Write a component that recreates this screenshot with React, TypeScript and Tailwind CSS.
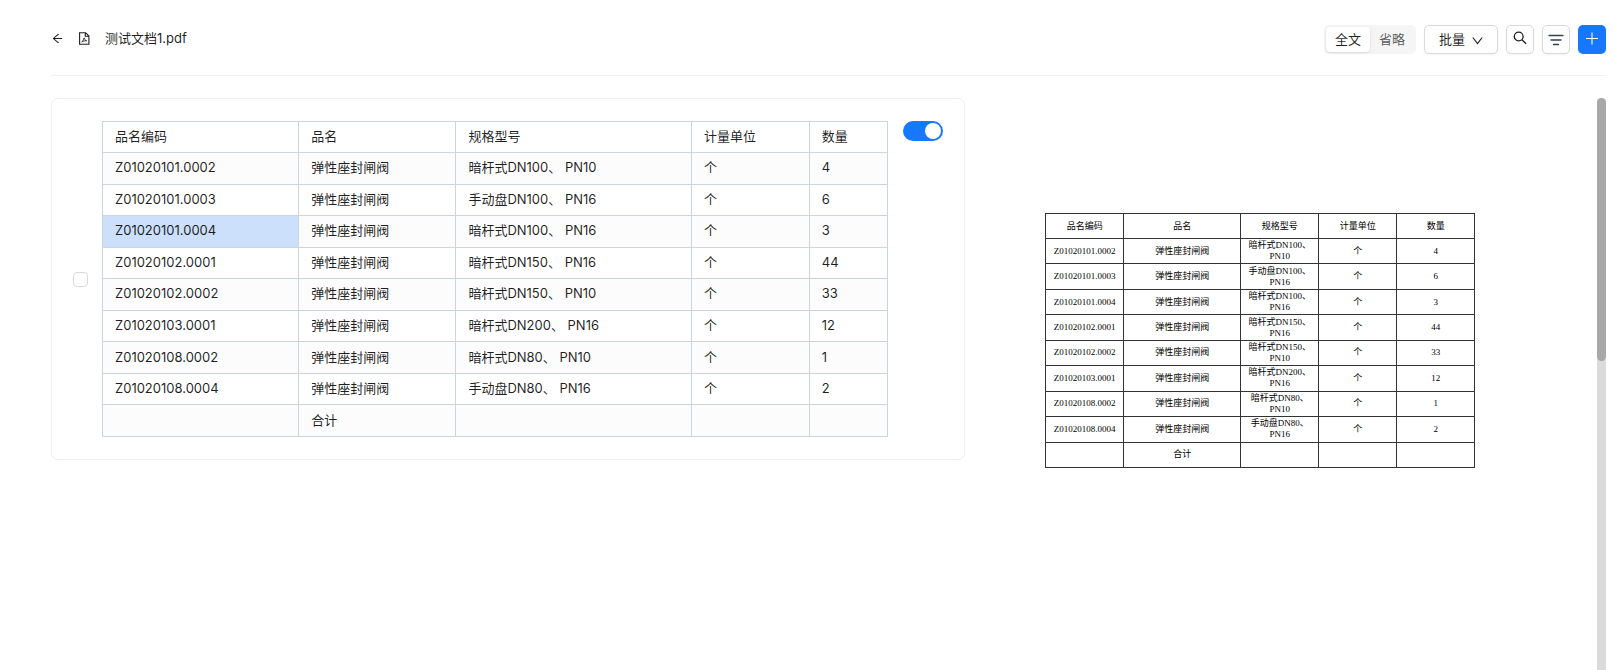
import React from "react";

const HEAD = ["品名编码", "品名", "规格型号", "计量单位", "数量"];

type Row = [string, string, string, string, string, string];

const ROWS: Row[] = [
  ["Z01020101.0002", "弹性座封闸阀", "暗杆式DN100、", "PN10", "个", "4"],
  ["Z01020101.0003", "弹性座封闸阀", "手动盘DN100、", "PN16", "个", "6"],
  ["Z01020101.0004", "弹性座封闸阀", "暗杆式DN100、", "PN16", "个", "3"],
  ["Z01020102.0001", "弹性座封闸阀", "暗杆式DN150、", "PN16", "个", "44"],
  ["Z01020102.0002", "弹性座封闸阀", "暗杆式DN150、", "PN10", "个", "33"],
  ["Z01020103.0001", "弹性座封闸阀", "暗杆式DN200、", "PN16", "个", "12"],
  ["Z01020108.0002", "弹性座封闸阀", "暗杆式DN80、", "PN10", "个", "1"],
  ["Z01020108.0004", "弹性座封闸阀", "手动盘DN80、", "PN16", "个", "2"],
  ["", "合计", "", "", "", ""],
];

function ArrowLeft() {
  return (
    <svg viewBox="0 0 1024 1024" className="size-[13px]" fill="currentColor" aria-hidden="true">
      <path d="M872 474H286.9l350.2-304c5.600-4.900 2.200-14-5.200-14h-88.500c-3.900 0-7.600 1.400-10.500 3.900L155 487.800a31.960 31.960 0 0 0 0 48.300L535.100 866c1.500 1.300 3.300 2 5.200 2h91.500c7.400 0 10.800-9.200 5.200-14L286.900 550H872c4.400 0 8-3.600 8-8v-60c0-4.400-3.600-8-8-8z" />
    </svg>
  );
}

function PdfFile() {
  return (
    <svg viewBox="0 0 13 13" className="size-[13px]" fill="none" stroke="currentColor" strokeWidth="1.1" aria-hidden="true">
      <path d="M1.600 .7h6l3.300 3.300v8.300H1.600zM7.300 .8v3.500H11" />
      <path strokeWidth=".8" d="M3.700 10c1-.6 2.300-2.800 2.400-4.200.3 1.500 1.200 2.900 2.600 3-1.500-.2-3.400.1-5 1.200z" />
    </svg>
  );
}

function Header() {
  return (
    <header className="flex h-[76px] items-start justify-between border-b border-[#f0f0f0] pt-[25px]">
      <div className="flex h-[26px] items-center">
        <button type="button" aria-label="返回">
          <ArrowLeft />
        </button>
        <span className="ml-[14px]">
          <PdfFile />
        </span>
        <h1 className="ml-[14px]">测试文档1.pdf</h1>
      </div>
      <div className="flex items-center gap-2">
        <div className="flex h-[29px] rounded-[5px] bg-[#f5f5f5] p-[2px]">
          <button type="button" className="rounded-[4px] bg-white px-[9px] pb-[2px] shadow-sm">全文</button>
          <button type="button" className="rounded-[4px] px-[9px] pb-[2px] text-black/65">省略</button>
        </div>
        <button type="button" className="flex h-[29px] items-center gap-[7px] rounded-[5px] border border-[#d9d9d9] bg-white px-[14px] pb-[2px] shadow-xs">
          批量
          <svg viewBox="0 0 11 14" className="h-[14px] w-[11px]" fill="none" stroke="currentColor" strokeWidth="1.200" aria-hidden="true">
            <path d="M.8 5.500l4.700 6 4.700-6" />
          </svg>
        </button>
        <button type="button" aria-label="搜索" className="flex h-[29px] w-[28px] items-start justify-center rounded-[5px] border border-[#d9d9d9] bg-white pt-[5px] shadow-xs">
          <svg viewBox="0 0 14 14" className="size-[14px]" fill="none" stroke="currentColor" strokeWidth="1.300" aria-hidden="true">
            <circle cx="5.700" cy="5.500" r="4.400" />
            <path d="M8.900 8.700l4.200 4.100" />
          </svg>
        </button>
        <button type="button" aria-label="筛选" className="flex h-[29px] w-[28px] items-center justify-center rounded-[5px] border border-[#d9d9d9] bg-white shadow-xs">
          <svg viewBox="0 0 16 12" className="h-[12px] w-[16px]" fill="none" stroke="#334155" strokeWidth="1.400" strokeLinecap="round" aria-hidden="true">
            <path d="M1 1.500h14M3 6h10M5.500 10.500h5" />
          </svg>
        </button>
        <button type="button" aria-label="新增" className="flex h-[29px] w-[28px] items-start justify-center rounded-[5px] bg-[#1677ff] pt-[7px] text-white">
          <svg viewBox="0 0 13 13" className="size-[13px]" fill="none" stroke="currentColor" strokeWidth="1.100" aria-hidden="true">
            <path d="M6 .5v12M0 6.500h12" />
          </svg>
        </button>
      </div>
    </header>
  );
}

function DataTable() {
  return (
    <table className="h-[316px] min-w-0 flex-1 table-fixed border-collapse text-left">
      <colgroup>
        <col className="w-[25%]" />
        <col className="w-[20%]" />
        <col className="w-[30%]" />
        <col className="w-[15%]" />
        <col className="w-[10%]" />
      </colgroup>
      <thead>
        <tr className="h-[31px]">
          {HEAD.map((h) => (
            <th key={h} className="border border-[#cbd5dc] px-[12px] pb-[2px] font-normal">{h}</th>
          ))}
        </tr>
      </thead>
      <tbody>
        {ROWS.map((r, i) => (
          <tr key={i} className="h-[31px] odd:bg-[#fcfcfc]">
            <td className={i === 2 ? "border border-[#cbd5dc] bg-[#cce0fc] px-[12px] pb-[2px]" : "border border-[#cbd5dc] px-[12px] pb-[2px]"}>{r[0]}</td>
            <td className="border border-[#cbd5dc] px-[12px] pb-[2px]">{r[1]}</td>
            <td className="border border-[#cbd5dc] px-[12px] pb-[2px]">{r[2]} {r[3]}</td>
            <td className="border border-[#cbd5dc] px-[12px] pb-[2px]">{r[4]}</td>
            <td className="border border-[#cbd5dc] px-[12px] pb-[2px]">{r[5]}</td>
          </tr>
        ))}
      </tbody>
    </table>
  );
}

function ScanTable() {
  return (
    <table className="h-[255px] w-[429px] table-fixed border-collapse text-center font-['Liberation_Serif','Noto_Sans_CJK_SC',serif] text-[9px] leading-[11px] text-black">
      <colgroup>
        <col className="w-[78px]" />
        <col className="w-[117px]" />
        <col className="w-[78px]" />
        <col className="w-[78px]" />
        <col className="w-[78px]" />
      </colgroup>
      <thead>
        <tr className="h-[25px]">
          {HEAD.map((h) => (
            <th key={h} className="border border-[#333] font-normal">{h}</th>
          ))}
        </tr>
      </thead>
      <tbody>
        {ROWS.map((r, i) => (
          <tr key={i} className="h-[25px]">
            <td className="border border-[#333]">{r[0]}</td>
            <td className="border border-[#333]">{r[1]}</td>
            <td className="border border-[#333]">
              {r[2]}
              {r[3] && <br />}
              {r[3]}
            </td>
            <td className="border border-[#333]">{r[4]}</td>
            <td className="border border-[#333]">{r[5]}</td>
          </tr>
        ))}
      </tbody>
    </table>
  );
}

export default function App() {
  return (
    <div className="flex h-screen flex-col overflow-hidden bg-white pr-[9px] pl-[51px] font-['Inter','Noto_Sans_CJK_SC',sans-serif] text-[13px] leading-[20px] text-black/88">
      <Header />
      <main className="flex min-h-0 flex-1 pt-[22px]">
        <section className="flex w-[58.8%] shrink-0 items-center self-start rounded-[7px] border border-[#f0f0f0] py-[22px] pr-[21px] pl-[21px]">
          <input type="checkbox" aria-label="选择表格" className="mr-[14px] size-[15px] shrink-0 appearance-none rounded-[4px] border border-[#d9d9d9] bg-white checked:bg-[#1677ff]" />
          <DataTable />
          <label className="ml-[15px] flex h-[20px] w-[40px] shrink-0 cursor-pointer items-center justify-end self-start rounded-full bg-[#1677ff] px-[2px]">
            <input type="checkbox" role="switch" aria-label="启用" defaultChecked className="size-[16px] appearance-none rounded-full bg-white" />
          </label>
        </section>
        <section className="flex min-w-0 flex-1 justify-center pt-[115px] pr-[42px]">
          <ScanTable />
        </section>
        <div className="w-[9px] shrink-0 rounded-t-full bg-[#dbdbdb]">
          <div className="h-[263px] rounded-full bg-[#a8a8a8]" />
        </div>
      </main>
    </div>
  );
}
